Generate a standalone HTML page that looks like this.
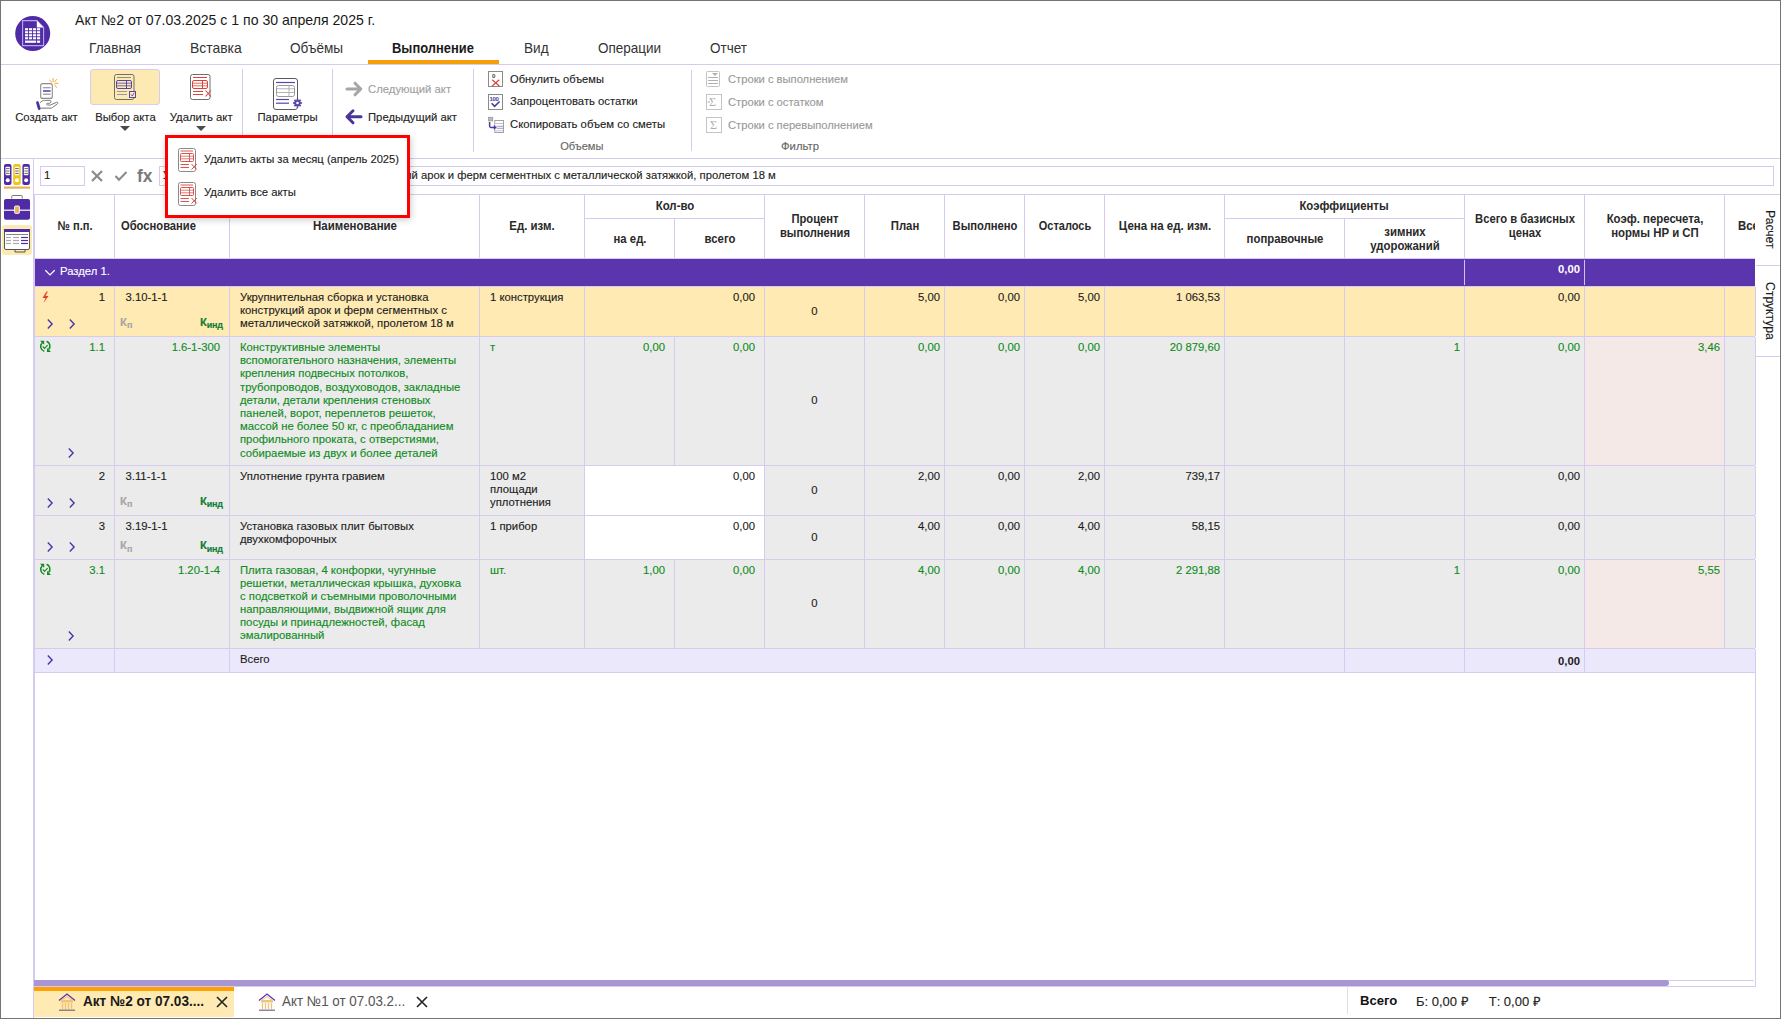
<!DOCTYPE html><html><head><meta charset="utf-8"><style>
html,body{margin:0;padding:0;}
body{width:1781px;height:1019px;position:relative;overflow:hidden;background:#fff;font-family:"Liberation Sans",sans-serif;}
.t{position:absolute;white-space:nowrap;line-height:1;-webkit-text-stroke:0.12px currentColor;}
.r{position:absolute;}
svg{position:absolute;overflow:visible;}
</style></head><body>
<div class="r" style="left:0px;top:0px;width:1781px;height:1px;background:#747474;"></div>
<div class="r" style="left:0px;top:0px;width:1px;height:1019px;background:#747474;"></div>
<div class="r" style="left:1780px;top:0px;width:1px;height:1019px;background:#747474;"></div>
<div class="r" style="left:0px;top:1018px;width:1781px;height:1px;background:#747474;"></div>
<svg style="left:15px;top:16px" width="36" height="36" viewBox="0 0 36 36">
<circle cx="17.7" cy="17.5" r="17.5" fill="#4f2ca6"/>
<path d="M7.6 4.6 H21.8 L28.6 11.4 V29.6 H7.6 Z" fill="none" stroke="#b9a9ee" stroke-width="1.1"/>
<path d="M21.8 4.6 V11.4 H28.6 Z" fill="#ffffff"/>
<g fill="#ffffff"><rect x="10" y="12.2" width="3.1" height="2.1"/><rect x="14" y="12.2" width="3.1" height="2.1"/><rect x="18" y="12.2" width="3.1" height="2.1"/><rect x="22" y="12.2" width="3.1" height="2.1"/><rect x="10" y="15.2" width="3.1" height="2.1"/><rect x="14" y="15.2" width="3.1" height="2.1"/><rect x="18" y="15.2" width="3.1" height="2.1"/><rect x="22" y="15.2" width="3.1" height="2.1"/><rect x="10" y="18.2" width="3.1" height="2.1"/><rect x="14" y="18.2" width="3.1" height="2.1"/><rect x="18" y="18.2" width="3.1" height="2.1"/><rect x="22" y="18.2" width="3.1" height="2.1"/><rect x="10" y="21.2" width="3.1" height="2.1"/><rect x="14" y="21.2" width="3.1" height="2.1"/><rect x="18" y="21.2" width="3.1" height="2.1"/><rect x="22" y="21.2" width="3.1" height="2.1"/><rect x="10" y="24.6" width="11.1" height="2.2"/><rect x="22" y="24.6" width="3.1" height="2.2"/></g></svg>
<div class="t" style="left:75px;top:13.36px;font-size:14.1px;color:#1a1a1a;-webkit-text-stroke:0;">Акт №2 от 07.03.2025 с 1 по 30 апреля 2025 г.</div>
<div class="t" style="left:89px;top:41.03px;font-size:14.5px;color:#333;transform:scaleX(0.9421);transform-origin:0 0;-webkit-text-stroke:0;">Главная</div>
<div class="t" style="left:189.5px;top:41.03px;font-size:14.5px;color:#333;transform:scaleX(0.9586);transform-origin:0 0;-webkit-text-stroke:0;">Вставка</div>
<div class="t" style="left:290px;top:41.03px;font-size:14.5px;color:#333;transform:scaleX(0.9379);transform-origin:0 0;-webkit-text-stroke:0;">Объёмы</div>
<div class="t" style="left:392px;top:41.53px;font-size:13.9px;color:#1a1a1a;font-weight:bold;-webkit-text-stroke:0;transform:scaleX(0.9309);transform-origin:0 0;-webkit-text-stroke:0;">Выполнение</div>
<div class="t" style="left:524.3px;top:41.03px;font-size:14.5px;color:#333;transform:scaleX(0.9379);transform-origin:0 0;-webkit-text-stroke:0;">Вид</div>
<div class="t" style="left:598px;top:41.03px;font-size:14.5px;color:#333;transform:scaleX(0.9310);transform-origin:0 0;-webkit-text-stroke:0;">Операции</div>
<div class="t" style="left:709.5px;top:41.03px;font-size:14.5px;color:#333;transform:scaleX(0.9310);transform-origin:0 0;-webkit-text-stroke:0;">Отчет</div>
<div class="r" style="left:368px;top:60px;width:131px;height:4px;background:#f59f0a;"></div>
<div class="r" style="left:1px;top:64px;width:1779px;height:1px;background:#d6caef;"></div>
<div class="r" style="left:1px;top:158px;width:1779px;height:1px;background:#d6caef;"></div>
<svg style="left:34px;top:76px" width="26" height="36" viewBox="34 76 26 36">
<rect x="40.7" y="83.6" width="11.6" height="14.8" rx="2" fill="#fff" stroke="#8c8c8c" stroke-width="1.1"/>
<line x1="43" y1="87.7" x2="50.6" y2="87.7" stroke="#9a9a9a" stroke-width="1.3"/>
<line x1="43" y1="91" x2="50.6" y2="91" stroke="#4d3a9e" stroke-width="1.5"/>
<line x1="43" y1="94.2" x2="50.6" y2="94.2" stroke="#9a9a9a" stroke-width="1.3"/>
<g stroke="#f4a93c" stroke-width="1" stroke-linecap="round"><line x1="53.1" y1="78.4" x2="53.1" y2="81.6"/><line x1="49.6" y1="80.2" x2="52" y2="82.4"/><line x1="56.5" y1="79.5" x2="54.6" y2="81.8"/><line x1="54.8" y1="83.3" x2="58" y2="83.3"/><line x1="54.6" y1="84.9" x2="56.5" y2="87.4"/></g>
<path d="M40 102.8 C41.5 101.2 42.8 100.4 44.5 100.4 H50 C51.3 100.4 51.3 102.8 49.5 103.3 H47.3 C46.3 103.3 46.3 105 47.5 105 H50.5 L56.5 102.3 C57.8 101.8 58.3 103.2 57.3 104 L52.5 107.5 C52 108 51.5 108.3 50.5 108.3 H40.5" fill="#fff" stroke="#7a7a7a" stroke-width="1"/>
<line x1="41" y1="108.2" x2="51" y2="108.2" stroke="#aaa" stroke-width="1.3"/>
<line x1="37.5" y1="102.6" x2="39.2" y2="108.6" stroke="#4b35a0" stroke-width="2.8" stroke-linecap="round"/>
</svg>
<div class="r" style="left:90px;top:69px;width:70px;height:36px;background:#fde9b2;box-sizing:border-box;border:1px solid #d9ccef;border-radius:3px;"></div>
<svg style="left:112px;top:72px" width="26" height="30" viewBox="112 72 26 30">
<rect x="114.5" y="74.5" width="19.5" height="25" rx="2" fill="#fde9b2" stroke="#6e6e6e" stroke-width="1"/>
<line x1="117" y1="77.5" x2="131" y2="77.5" stroke="#8c8c8c" stroke-width="1"/>
<rect x="116.5" y="80.5" width="15" height="8" rx="1.5" fill="none" stroke="#5a45a8" stroke-width="1"/>
<line x1="117" y1="83.2" x2="131" y2="83.2" stroke="#5a45a8" stroke-width="0.8"/>
<line x1="117" y1="85.8" x2="131" y2="85.8" stroke="#5a45a8" stroke-width="0.8"/>
<line x1="126.5" y1="80.5" x2="126.5" y2="88.5" stroke="#5a45a8" stroke-width="1"/>
<line x1="117" y1="91.5" x2="127" y2="91.5" stroke="#9a9a9a" stroke-width="1"/>
<line x1="117" y1="94.5" x2="127" y2="94.5" stroke="#9a9a9a" stroke-width="1"/>
<rect x="129.5" y="91.5" width="6" height="6" fill="#fde9b2" stroke="#5a45a8" stroke-width="1"/>
<path d="M131 94.5 L132.3 96 L134.3 92.8" fill="none" stroke="#5a45a8" stroke-width="0.9"/>
</svg>
<svg style="left:188px;top:72px" width="26" height="30" viewBox="188 72 26 30">
<rect x="190.5" y="74.5" width="19.5" height="25" rx="2" fill="#fff" stroke="#6e6e6e" stroke-width="1"/>
<line x1="193" y1="77.5" x2="207" y2="77.5" stroke="#d9433a" stroke-width="1"/>
<rect x="192.5" y="80.5" width="15" height="8" rx="1.5" fill="none" stroke="#d9433a" stroke-width="1"/>
<line x1="193" y1="83.2" x2="207" y2="83.2" stroke="#d9433a" stroke-width="0.8"/>
<line x1="193" y1="85.8" x2="207" y2="85.8" stroke="#d9433a" stroke-width="0.8"/>
<line x1="202.5" y1="80.5" x2="202.5" y2="88.5" stroke="#d9433a" stroke-width="1"/>
<line x1="193" y1="91.5" x2="203" y2="91.5" stroke="#d9433a" stroke-width="1"/>
<line x1="193" y1="94.5" x2="203" y2="94.5" stroke="#d9433a" stroke-width="1"/>
<path d="M205.5 90.5 L211 96.5 M211 90.5 L205.5 96.5" stroke="#d9433a" stroke-width="1.1"/>
</svg>
<div class="t" style="left:15.2px;top:111.63px;font-size:11.3px;color:#222;">Создать акт</div>
<div class="t" style="left:95.2px;top:111.63px;font-size:11.3px;color:#222;">Выбор акта</div>
<div class="t" style="left:169.8px;top:111.63px;font-size:11.3px;color:#222;">Удалить акт</div>
<svg style="left:120px;top:126px" width="10" height="5" viewBox="0 0 10 5"><path d="M0 0 H10 L5 5 Z" fill="#4a4a4a"/></svg>
<svg style="left:196px;top:126px" width="10" height="5" viewBox="0 0 10 5"><path d="M0 0 H10 L5 5 Z" fill="#4a4a4a"/></svg>
<div class="r" style="left:242px;top:69px;width:1px;height:83px;background:#d6caef;"></div>
<svg style="left:271px;top:76px" width="34" height="36" viewBox="271 76 34 36">
<rect x="273.5" y="78.5" width="24" height="31" rx="2.5" fill="#fff" stroke="#5a5a5a" stroke-width="1"/>
<line x1="276" y1="82.5" x2="295" y2="82.5" stroke="#5a45a8" stroke-width="1.2"/>
<rect x="276.5" y="85.5" width="18" height="11" rx="2" fill="#fff" stroke="#999" stroke-width="1"/>
<line x1="277" y1="88.8" x2="294" y2="88.8" stroke="#aaa" stroke-width="0.9"/>
<line x1="277" y1="92.5" x2="294" y2="92.5" stroke="#aaa" stroke-width="0.9"/>
<line x1="289" y1="85.5" x2="289" y2="96.5" stroke="#aaa" stroke-width="0.9"/>
<line x1="276" y1="99.5" x2="289" y2="99.5" stroke="#5a45a8" stroke-width="1.2"/>
<line x1="276" y1="103.2" x2="289" y2="103.2" stroke="#5a45a8" stroke-width="1.2"/>
<circle cx="297.5" cy="103" r="3.1" fill="#5a45a8"/><rect x="296.6" y="98.6" width="1.8" height="2.2" fill="#5a45a8" transform="rotate(0 297.5 103)"/><rect x="296.6" y="98.6" width="1.8" height="2.2" fill="#5a45a8" transform="rotate(45 297.5 103)"/><rect x="296.6" y="98.6" width="1.8" height="2.2" fill="#5a45a8" transform="rotate(90 297.5 103)"/><rect x="296.6" y="98.6" width="1.8" height="2.2" fill="#5a45a8" transform="rotate(135 297.5 103)"/><rect x="296.6" y="98.6" width="1.8" height="2.2" fill="#5a45a8" transform="rotate(180 297.5 103)"/><rect x="296.6" y="98.6" width="1.8" height="2.2" fill="#5a45a8" transform="rotate(225 297.5 103)"/><rect x="296.6" y="98.6" width="1.8" height="2.2" fill="#5a45a8" transform="rotate(270 297.5 103)"/><rect x="296.6" y="98.6" width="1.8" height="2.2" fill="#5a45a8" transform="rotate(315 297.5 103)"/>
<circle cx="297.5" cy="103" r="1.3" fill="#fff"/>
</svg>
<div class="t" style="left:257.5px;top:111.63px;font-size:11.3px;color:#222;">Параметры</div>
<div class="r" style="left:332px;top:69px;width:1px;height:83px;background:#d6caef;"></div>
<svg style="left:344px;top:80px" width="20" height="48" viewBox="344 80 20 48">
<path d="M347 89 H360 M355 83.2 L360.8 89 L355 94.8" fill="none" stroke="#a6a6a6" stroke-width="3" stroke-linecap="round" stroke-linejoin="round"/>
<path d="M361 116.8 H348 M353 110.8 L347 116.8 L353 122.8" fill="none" stroke="#4a3597" stroke-width="3" stroke-linecap="round" stroke-linejoin="round"/>
</svg>
<div class="t" style="left:368px;top:84.03px;font-size:11.3px;color:#a0a0a0;">Следующий акт</div>
<div class="t" style="left:368px;top:111.63px;font-size:11.3px;color:#222;">Предыдущий акт</div>
<div class="r" style="left:473px;top:69px;width:1px;height:83px;background:#d6caef;"></div>
<svg style="left:486px;top:69px" width="22" height="66" viewBox="486 69 22 66">
<rect x="488.5" y="71.5" width="14" height="15" fill="#fff" stroke="#8a8a8a" stroke-width="1"/>
<text x="492" y="77.8" font-size="6.2" font-weight="bold" fill="#444" font-family="Liberation Sans">0</text>
<path d="M492.2 79.7 L499.3 86 M499.3 79.7 L492.2 86" stroke="#d9433a" stroke-width="1.2"/>
<rect x="488.5" y="94.5" width="14" height="15" fill="#fff" stroke="#8a8a8a" stroke-width="1"/>
<text x="489.4" y="100.6" font-size="6" font-weight="bold" fill="#4d3a9e" font-family="Liberation Sans" letter-spacing="-0.3">100</text>
<path d="M491.6 103.3 L494.6 106.4 L499.6 101.5" fill="none" stroke="#4d3a9e" stroke-width="1.6"/>
<rect x="488.5" y="117.3" width="4.2" height="3.6" fill="#bbb" stroke="#999" stroke-width="0.8"/>
<rect x="494.8" y="120.5" width="8.7" height="12" fill="#fff" stroke="#999" stroke-width="0.9"/>
<line x1="495.5" y1="123.5" x2="503" y2="123.5" stroke="#aaa" stroke-width="0.7"/>
<line x1="496.5" y1="126.3" x2="503" y2="126.3" stroke="#8a7cc4" stroke-width="0.8"/>
<line x1="496.5" y1="128.3" x2="503" y2="128.3" stroke="#8a7cc4" stroke-width="0.8"/>
<line x1="495.5" y1="130.8" x2="503" y2="130.8" stroke="#aaa" stroke-width="0.7"/>
<path d="M489.6 122 V126 Q489.6 127.4 491 127.4 H494.5" fill="none" stroke="#4d3a9e" stroke-width="1.5"/>
<path d="M493.8 125 L496.8 127.4 L493.8 129.8 Z" fill="#4d3a9e"/>
</svg>
<div class="t" style="left:510px;top:73.60px;font-size:11.1px;color:#222;">Обнулить объемы</div>
<div class="t" style="left:510px;top:96.43px;font-size:11.3px;color:#222;">Запроцентовать остатки</div>
<div class="t" style="left:510px;top:119.43px;font-size:11.3px;color:#222;">Скопировать объем со сметы</div>
<div class="t" style="left:281.79999999999995px;width:600px;text-align:center;top:140.60px;font-size:11.1px;color:#666;">Объемы</div>
<div class="r" style="left:691px;top:70px;width:1px;height:81px;background:#d6caef;"></div>
<svg style="left:704px;top:69px" width="22" height="66" viewBox="704 69 22 66">
<rect x="706.5" y="71.5" width="13" height="15" rx="1" fill="#fff" stroke="#c4c4c4" stroke-width="1"/>
<line x1="708" y1="77.5" x2="718" y2="77.5" stroke="#b0b0b0" stroke-width="1"/>
<line x1="708" y1="80.5" x2="718" y2="80.5" stroke="#b0b0b0" stroke-width="1"/>
<line x1="708" y1="83.5" x2="718" y2="83.5" stroke="#b0b0b0" stroke-width="1"/>
<path d="M712 73 H718 L715 76 Z" fill="#b0b0b0"/>
<rect x="706.5" y="94.5" width="15" height="15" fill="#fff" stroke="#c4c4c4" stroke-width="1"/>
<text x="709" y="106" font-size="12" fill="#b0b0b0" font-family="Liberation Serif">Σ</text>
<line x1="707.5" y1="102" x2="710" y2="102" stroke="#b0b0b0" stroke-width="1"/>
<rect x="706.5" y="117.5" width="15" height="15" fill="#fff" stroke="#c4c4c4" stroke-width="1"/>
<text x="710" y="129" font-size="12" fill="#b0b0b0" font-family="Liberation Serif">Σ</text>
</svg>
<div class="t" style="left:728px;top:73.52px;font-size:11.2px;color:#999999;">Строки с выполнением</div>
<div class="t" style="left:728px;top:96.52px;font-size:11.2px;color:#999999;">Строки с остатком</div>
<div class="t" style="left:728px;top:119.52px;font-size:11.2px;color:#999999;">Строки с перевыполнением</div>
<div class="t" style="left:500.0px;width:600px;text-align:center;top:141.43px;font-size:11.3px;color:#666;">Фильтр</div>
<div class="r" style="left:33px;top:158px;width:1px;height:860px;background:#d6caef;"></div>
<svg style="left:2px;top:162px" width="30" height="95" viewBox="2 162 30 95">
<rect x="4" y="164" width="7.5" height="21" rx="2" fill="#4f2ca6"/>
<rect x="13.2" y="164" width="7.5" height="21" rx="2" fill="#f0c419"/>
<rect x="22.4" y="164" width="7.5" height="21" rx="2" fill="#4f2ca6"/>
<g fill="#fff">
<rect x="5.5" y="166.8" width="4.5" height="8.5" rx="0.8"/><rect x="14.7" y="166.8" width="4.5" height="8.5" rx="0.8"/><rect x="23.9" y="166.8" width="4.5" height="8.5" rx="0.8"/>
<circle cx="7.75" cy="180.3" r="2"/><circle cx="16.95" cy="180.3" r="2"/><circle cx="26.15" cy="180.3" r="2"/>
</g>
<g stroke="#555" stroke-width="0.9"><line x1="6" y1="168.6" x2="9.5" y2="168.6"/><line x1="6" y1="171" x2="9.5" y2="171"/><line x1="6" y1="173.4" x2="9.5" y2="173.4"/>
<line x1="15.2" y1="168.6" x2="18.7" y2="168.6"/><line x1="15.2" y1="171" x2="18.7" y2="171"/><line x1="15.2" y1="173.4" x2="18.7" y2="173.4"/>
<line x1="24.4" y1="168.6" x2="27.9" y2="168.6"/><line x1="24.4" y1="171" x2="27.9" y2="171"/><line x1="24.4" y1="173.4" x2="27.9" y2="173.4"/></g>
<rect x="4" y="186.5" width="26" height="2.2" fill="#e8b15a"/>
<path d="M11.8 198.5 V196.3 Q11.8 195.5 12.6 195.5 H21.4 Q22.2 195.5 22.2 196.3 V198.5" fill="none" stroke="#777" stroke-width="1"/>
<rect x="4" y="199" width="26" height="20.8" rx="2" fill="#4f2ca6"/>
<line x1="4" y1="210.2" x2="30" y2="210.2" stroke="#fff" stroke-width="1.2"/>
<rect x="14.6" y="206" width="4.8" height="7.4" rx="0.8" fill="#e8b15a" stroke="#fff" stroke-width="0.9"/>
<rect x="2" y="225" width="30" height="30" rx="3" fill="#fde9b2"/>
<rect x="4.5" y="229.5" width="25" height="20" rx="1.5" fill="#fff" stroke="#555" stroke-width="1"/>
<rect x="4" y="229" width="26" height="3" fill="#4f2ca6"/>
<line x1="6" y1="234.5" x2="28" y2="234.5" stroke="#666" stroke-width="0.8"/>
<g stroke="#aaa" stroke-width="1.2"><line x1="6" y1="237.5" x2="11" y2="237.5"/><line x1="6" y1="240.5" x2="11" y2="240.5"/><line x1="6" y1="243.5" x2="11" y2="243.5"/>
<line x1="13" y1="237.5" x2="19" y2="237.5"/><line x1="13" y1="240.5" x2="19" y2="240.5"/><line x1="13" y1="243.5" x2="19" y2="243.5"/></g>
<g stroke="#4f2ca6" stroke-width="1.2"><line x1="21" y1="237.5" x2="28" y2="237.5"/><line x1="21" y1="240.5" x2="28" y2="240.5"/><line x1="21" y1="243.5" x2="28" y2="243.5"/></g>
<path d="M15 250 V252 H25 V250" fill="none" stroke="#555" stroke-width="1"/>
</svg>
<div class="r" style="left:40px;top:166px;width:45px;height:20px;background:#fff;box-sizing:border-box;border:1px solid #d6caef;"></div>
<div class="t" style="left:44px;top:169.93px;font-size:11.3px;color:#222;">1</div>
<svg style="left:88px;top:166px" width="70" height="20" viewBox="88 166 70 20">
<path d="M92 171 L102 181 M102 171 L92 181" stroke="#8a8a8a" stroke-width="2.2"/>
<path d="M115.5 176 L119 179.8 L126.5 172" fill="none" stroke="#8a8a8a" stroke-width="2"/>
</svg>
<div class="t" style="left:136.5px;top:166.42px;font-size:19px;color:#7a7a7a;font-weight:bold;-webkit-text-stroke:0;transform:scaleX(0.9211);transform-origin:0 0;">fx</div>
<div class="r" style="left:159px;top:166px;width:1615px;height:20px;background:#fff;box-sizing:border-box;border:1px solid #d6caef;"></div>
<div class="t" style="left:163px;top:169.98px;font-size:11.25px;color:#222;">Укрупнительная сборка и установка конструкций арок и ферм сегментных с металлической затяжкой, пролетом 18 м</div>
<div class="r" style="left:34px;top:194px;width:1721px;height:1px;background:#d6caef;"></div>
<div class="r" style="left:34px;top:194px;width:1px;height:64px;background:#d6caef;"></div>
<div class="r" style="left:114px;top:194px;width:1px;height:64px;background:#d6caef;"></div>
<div class="r" style="left:229px;top:194px;width:1px;height:64px;background:#d6caef;"></div>
<div class="r" style="left:479px;top:194px;width:1px;height:64px;background:#d6caef;"></div>
<div class="r" style="left:584px;top:194px;width:1px;height:64px;background:#d6caef;"></div>
<div class="r" style="left:674px;top:218px;width:1px;height:40px;background:#d6caef;"></div>
<div class="r" style="left:764px;top:194px;width:1px;height:64px;background:#d6caef;"></div>
<div class="r" style="left:864px;top:194px;width:1px;height:64px;background:#d6caef;"></div>
<div class="r" style="left:944px;top:194px;width:1px;height:64px;background:#d6caef;"></div>
<div class="r" style="left:1024px;top:194px;width:1px;height:64px;background:#d6caef;"></div>
<div class="r" style="left:1104px;top:194px;width:1px;height:64px;background:#d6caef;"></div>
<div class="r" style="left:1224px;top:194px;width:1px;height:64px;background:#d6caef;"></div>
<div class="r" style="left:1344px;top:218px;width:1px;height:40px;background:#d6caef;"></div>
<div class="r" style="left:1464px;top:194px;width:1px;height:64px;background:#d6caef;"></div>
<div class="r" style="left:1584px;top:194px;width:1px;height:64px;background:#d6caef;"></div>
<div class="r" style="left:1724px;top:194px;width:1px;height:64px;background:#d6caef;"></div>
<div class="r" style="left:584px;top:218px;width:180px;height:1px;background:#d6caef;"></div>
<div class="r" style="left:1224px;top:218px;width:240px;height:1px;background:#d6caef;"></div>
<div class="t" style="left:-225.5px;width:600px;text-align:center;top:220.03px;font-size:12.6px;color:#2a2a2a;font-weight:bold;-webkit-text-stroke:0;transform:scaleX(0.8810);transform-origin:50% 0;">№ п.п.</div>
<div class="t" style="left:121.3px;top:220.03px;font-size:12.6px;color:#2a2a2a;font-weight:bold;-webkit-text-stroke:0;transform:scaleX(0.8889);transform-origin:0 0;">Обоснование</div>
<div class="t" style="left:55.0px;width:600px;text-align:center;top:220.03px;font-size:12.6px;color:#2a2a2a;font-weight:bold;-webkit-text-stroke:0;transform:scaleX(0.9087);transform-origin:50% 0;">Наименование</div>
<div class="t" style="left:232.0px;width:600px;text-align:center;top:220.03px;font-size:12.6px;color:#2a2a2a;font-weight:bold;-webkit-text-stroke:0;transform:scaleX(0.9087);transform-origin:50% 0;">Ед. изм.</div>
<div class="t" style="left:375.0px;width:600px;text-align:center;top:200.33px;font-size:12.6px;color:#2a2a2a;font-weight:bold;-webkit-text-stroke:0;transform:scaleX(0.9087);transform-origin:50% 0;">Кол-во</div>
<div class="t" style="left:330.0px;width:600px;text-align:center;top:232.73px;font-size:12.6px;color:#2a2a2a;font-weight:bold;-webkit-text-stroke:0;transform:scaleX(0.9008);transform-origin:50% 0;">на ед.</div>
<div class="t" style="left:420.0px;width:600px;text-align:center;top:232.73px;font-size:12.6px;color:#2a2a2a;font-weight:bold;-webkit-text-stroke:0;transform:scaleX(0.9008);transform-origin:50% 0;">всего</div>
<div class="t" style="left:514.5px;width:600px;text-align:center;top:213.33px;font-size:12.6px;color:#2a2a2a;font-weight:bold;-webkit-text-stroke:0;transform:scaleX(0.8889);transform-origin:50% 0;">Процент</div>
<div class="t" style="left:514.5px;width:600px;text-align:center;top:226.93px;font-size:12.6px;color:#2a2a2a;font-weight:bold;-webkit-text-stroke:0;transform:scaleX(0.8889);transform-origin:50% 0;">выполнения</div>
<div class="t" style="left:605.0px;width:600px;text-align:center;top:220.03px;font-size:12.6px;color:#2a2a2a;font-weight:bold;-webkit-text-stroke:0;transform:scaleX(0.9008);transform-origin:50% 0;">План</div>
<div class="t" style="left:685.0px;width:600px;text-align:center;top:220.03px;font-size:12.6px;color:#2a2a2a;font-weight:bold;-webkit-text-stroke:0;transform:scaleX(0.8929);transform-origin:50% 0;">Выполнено</div>
<div class="t" style="left:765.0px;width:600px;text-align:center;top:220.03px;font-size:12.6px;color:#2a2a2a;font-weight:bold;-webkit-text-stroke:0;transform:scaleX(0.8730);transform-origin:50% 0;">Осталось</div>
<div class="t" style="left:865.0px;width:600px;text-align:center;top:220.03px;font-size:12.6px;color:#2a2a2a;font-weight:bold;-webkit-text-stroke:0;transform:scaleX(0.9127);transform-origin:50% 0;">Цена на ед. изм.</div>
<div class="t" style="left:1044.0px;width:600px;text-align:center;top:200.33px;font-size:12.6px;color:#2a2a2a;font-weight:bold;-webkit-text-stroke:0;transform:scaleX(0.9008);transform-origin:50% 0;">Коэффициенты</div>
<div class="t" style="left:985.0px;width:600px;text-align:center;top:232.73px;font-size:12.6px;color:#2a2a2a;font-weight:bold;-webkit-text-stroke:0;transform:scaleX(0.9008);transform-origin:50% 0;">поправочные</div>
<div class="t" style="left:1105.0px;width:600px;text-align:center;top:226.33px;font-size:12.6px;color:#2a2a2a;font-weight:bold;-webkit-text-stroke:0;transform:scaleX(0.9048);transform-origin:50% 0;">зимних</div>
<div class="t" style="left:1105.0px;width:600px;text-align:center;top:240.13px;font-size:12.6px;color:#2a2a2a;font-weight:bold;-webkit-text-stroke:0;transform:scaleX(0.9048);transform-origin:50% 0;">удорожаний</div>
<div class="t" style="left:1225.0px;width:600px;text-align:center;top:212.73px;font-size:12.6px;color:#2a2a2a;font-weight:bold;-webkit-text-stroke:0;transform:scaleX(0.8929);transform-origin:50% 0;">Всего в базисных</div>
<div class="t" style="left:1225.0px;width:600px;text-align:center;top:227.13px;font-size:12.6px;color:#2a2a2a;font-weight:bold;-webkit-text-stroke:0;transform:scaleX(0.8929);transform-origin:50% 0;">ценах</div>
<div class="t" style="left:1355.0px;width:600px;text-align:center;top:212.73px;font-size:12.6px;color:#2a2a2a;font-weight:bold;-webkit-text-stroke:0;transform:scaleX(0.9048);transform-origin:50% 0;">Коэф. пересчета,</div>
<div class="t" style="left:1355.0px;width:600px;text-align:center;top:227.13px;font-size:12.6px;color:#2a2a2a;font-weight:bold;-webkit-text-stroke:0;transform:scaleX(0.9048);transform-origin:50% 0;">нормы НР и СП</div>
<div style="position:absolute;left:1725px;top:194px;width:30px;height:64px;overflow:hidden;"><div class="t" style="left:12.5px;top:26.03px;font-size:12.6px;color:#2a2a2a;font-weight:bold;transform:scaleX(0.9008);transform-origin:0 0;">Всего</div></div>
<div class="r" style="left:34px;top:259px;width:1721px;height:27px;background:#5b35ae;"></div>
<div class="r" style="left:34px;top:258px;width:1721px;height:1px;background:#d6caef;"></div>
<div class="r" style="left:1464px;top:260px;width:1px;height:25px;background:#cfc3ec;"></div>
<div class="r" style="left:1584px;top:260px;width:1px;height:25px;background:#cfc3ec;"></div>
<svg style="left:44px;top:267px" width="12" height="10" viewBox="44 267 12 10"><path d="M45.3 270.2 L50 274.9 L54.7 270.2" fill="none" stroke="#fff" stroke-width="1.3"/></svg>
<div class="t" style="left:60px;top:265.73px;font-size:11.3px;color:#fff;">Раздел 1.</div>
<div class="t" style="left:980px;width:600px;text-align:right;top:264.43px;font-size:11.3px;color:#fff;font-weight:bold;-webkit-text-stroke:0;">0,00</div>
<div class="r" style="left:34px;top:287px;width:1721px;height:49px;background:#feeab2;"></div>
<div class="r" style="left:34px;top:337px;width:1721px;height:128px;background:#ebebeb;"></div>
<div class="r" style="left:1585px;top:337px;width:139px;height:128px;background:#f4e9e6;"></div>
<div class="r" style="left:34px;top:466px;width:1721px;height:49px;background:#ebebeb;"></div>
<div class="r" style="left:585px;top:466px;width:179px;height:49px;background:#ffffff;"></div>
<div class="r" style="left:34px;top:516px;width:1721px;height:43px;background:#ebebeb;"></div>
<div class="r" style="left:585px;top:516px;width:179px;height:43px;background:#ffffff;"></div>
<div class="r" style="left:34px;top:560px;width:1721px;height:88px;background:#ebebeb;"></div>
<div class="r" style="left:1585px;top:560px;width:139px;height:88px;background:#f4e9e6;"></div>
<div class="r" style="left:34px;top:649px;width:1721px;height:23px;background:#ece8fc;"></div>
<div class="r" style="left:34px;top:286px;width:1721px;height:1px;background:#d6caef;"></div>
<div class="r" style="left:34px;top:336px;width:1721px;height:1px;background:#d6caef;"></div>
<div class="r" style="left:34px;top:465px;width:1721px;height:1px;background:#d6caef;"></div>
<div class="r" style="left:34px;top:515px;width:1721px;height:1px;background:#d6caef;"></div>
<div class="r" style="left:34px;top:559px;width:1721px;height:1px;background:#d6caef;"></div>
<div class="r" style="left:34px;top:648px;width:1721px;height:1px;background:#d6caef;"></div>
<div class="r" style="left:34px;top:672px;width:1721px;height:1px;background:#d6caef;"></div>
<div class="r" style="left:34px;top:287px;width:1px;height:49px;background:#d6caef;"></div>
<div class="r" style="left:114px;top:287px;width:1px;height:49px;background:#d6caef;"></div>
<div class="r" style="left:229px;top:287px;width:1px;height:49px;background:#d6caef;"></div>
<div class="r" style="left:479px;top:287px;width:1px;height:49px;background:#d6caef;"></div>
<div class="r" style="left:584px;top:287px;width:1px;height:49px;background:#d6caef;"></div>
<div class="r" style="left:764px;top:287px;width:1px;height:49px;background:#d6caef;"></div>
<div class="r" style="left:864px;top:287px;width:1px;height:49px;background:#d6caef;"></div>
<div class="r" style="left:944px;top:287px;width:1px;height:49px;background:#d6caef;"></div>
<div class="r" style="left:1024px;top:287px;width:1px;height:49px;background:#d6caef;"></div>
<div class="r" style="left:1104px;top:287px;width:1px;height:49px;background:#d6caef;"></div>
<div class="r" style="left:1224px;top:287px;width:1px;height:49px;background:#d6caef;"></div>
<div class="r" style="left:1344px;top:287px;width:1px;height:49px;background:#d6caef;"></div>
<div class="r" style="left:1464px;top:287px;width:1px;height:49px;background:#d6caef;"></div>
<div class="r" style="left:1584px;top:287px;width:1px;height:49px;background:#d6caef;"></div>
<div class="r" style="left:1724px;top:287px;width:1px;height:49px;background:#d6caef;"></div>
<div class="r" style="left:1755px;top:287px;width:1px;height:49px;background:#d6caef;"></div>
<div class="r" style="left:34px;top:337px;width:1px;height:128px;background:#d6caef;"></div>
<div class="r" style="left:114px;top:337px;width:1px;height:128px;background:#d6caef;"></div>
<div class="r" style="left:229px;top:337px;width:1px;height:128px;background:#d6caef;"></div>
<div class="r" style="left:479px;top:337px;width:1px;height:128px;background:#d6caef;"></div>
<div class="r" style="left:584px;top:337px;width:1px;height:128px;background:#d6caef;"></div>
<div class="r" style="left:674px;top:337px;width:1px;height:128px;background:#d6caef;"></div>
<div class="r" style="left:764px;top:337px;width:1px;height:128px;background:#d6caef;"></div>
<div class="r" style="left:864px;top:337px;width:1px;height:128px;background:#d6caef;"></div>
<div class="r" style="left:944px;top:337px;width:1px;height:128px;background:#d6caef;"></div>
<div class="r" style="left:1024px;top:337px;width:1px;height:128px;background:#d6caef;"></div>
<div class="r" style="left:1104px;top:337px;width:1px;height:128px;background:#d6caef;"></div>
<div class="r" style="left:1224px;top:337px;width:1px;height:128px;background:#d6caef;"></div>
<div class="r" style="left:1344px;top:337px;width:1px;height:128px;background:#d6caef;"></div>
<div class="r" style="left:1464px;top:337px;width:1px;height:128px;background:#d6caef;"></div>
<div class="r" style="left:1584px;top:337px;width:1px;height:128px;background:#d6caef;"></div>
<div class="r" style="left:1724px;top:337px;width:1px;height:128px;background:#d6caef;"></div>
<div class="r" style="left:1755px;top:337px;width:1px;height:128px;background:#d6caef;"></div>
<div class="r" style="left:34px;top:466px;width:1px;height:49px;background:#d6caef;"></div>
<div class="r" style="left:114px;top:466px;width:1px;height:49px;background:#d6caef;"></div>
<div class="r" style="left:229px;top:466px;width:1px;height:49px;background:#d6caef;"></div>
<div class="r" style="left:479px;top:466px;width:1px;height:49px;background:#d6caef;"></div>
<div class="r" style="left:584px;top:466px;width:1px;height:49px;background:#d6caef;"></div>
<div class="r" style="left:764px;top:466px;width:1px;height:49px;background:#d6caef;"></div>
<div class="r" style="left:864px;top:466px;width:1px;height:49px;background:#d6caef;"></div>
<div class="r" style="left:944px;top:466px;width:1px;height:49px;background:#d6caef;"></div>
<div class="r" style="left:1024px;top:466px;width:1px;height:49px;background:#d6caef;"></div>
<div class="r" style="left:1104px;top:466px;width:1px;height:49px;background:#d6caef;"></div>
<div class="r" style="left:1224px;top:466px;width:1px;height:49px;background:#d6caef;"></div>
<div class="r" style="left:1344px;top:466px;width:1px;height:49px;background:#d6caef;"></div>
<div class="r" style="left:1464px;top:466px;width:1px;height:49px;background:#d6caef;"></div>
<div class="r" style="left:1584px;top:466px;width:1px;height:49px;background:#d6caef;"></div>
<div class="r" style="left:1724px;top:466px;width:1px;height:49px;background:#d6caef;"></div>
<div class="r" style="left:1755px;top:466px;width:1px;height:49px;background:#d6caef;"></div>
<div class="r" style="left:34px;top:516px;width:1px;height:43px;background:#d6caef;"></div>
<div class="r" style="left:114px;top:516px;width:1px;height:43px;background:#d6caef;"></div>
<div class="r" style="left:229px;top:516px;width:1px;height:43px;background:#d6caef;"></div>
<div class="r" style="left:479px;top:516px;width:1px;height:43px;background:#d6caef;"></div>
<div class="r" style="left:584px;top:516px;width:1px;height:43px;background:#d6caef;"></div>
<div class="r" style="left:764px;top:516px;width:1px;height:43px;background:#d6caef;"></div>
<div class="r" style="left:864px;top:516px;width:1px;height:43px;background:#d6caef;"></div>
<div class="r" style="left:944px;top:516px;width:1px;height:43px;background:#d6caef;"></div>
<div class="r" style="left:1024px;top:516px;width:1px;height:43px;background:#d6caef;"></div>
<div class="r" style="left:1104px;top:516px;width:1px;height:43px;background:#d6caef;"></div>
<div class="r" style="left:1224px;top:516px;width:1px;height:43px;background:#d6caef;"></div>
<div class="r" style="left:1344px;top:516px;width:1px;height:43px;background:#d6caef;"></div>
<div class="r" style="left:1464px;top:516px;width:1px;height:43px;background:#d6caef;"></div>
<div class="r" style="left:1584px;top:516px;width:1px;height:43px;background:#d6caef;"></div>
<div class="r" style="left:1724px;top:516px;width:1px;height:43px;background:#d6caef;"></div>
<div class="r" style="left:1755px;top:516px;width:1px;height:43px;background:#d6caef;"></div>
<div class="r" style="left:34px;top:560px;width:1px;height:88px;background:#d6caef;"></div>
<div class="r" style="left:114px;top:560px;width:1px;height:88px;background:#d6caef;"></div>
<div class="r" style="left:229px;top:560px;width:1px;height:88px;background:#d6caef;"></div>
<div class="r" style="left:479px;top:560px;width:1px;height:88px;background:#d6caef;"></div>
<div class="r" style="left:584px;top:560px;width:1px;height:88px;background:#d6caef;"></div>
<div class="r" style="left:674px;top:560px;width:1px;height:88px;background:#d6caef;"></div>
<div class="r" style="left:764px;top:560px;width:1px;height:88px;background:#d6caef;"></div>
<div class="r" style="left:864px;top:560px;width:1px;height:88px;background:#d6caef;"></div>
<div class="r" style="left:944px;top:560px;width:1px;height:88px;background:#d6caef;"></div>
<div class="r" style="left:1024px;top:560px;width:1px;height:88px;background:#d6caef;"></div>
<div class="r" style="left:1104px;top:560px;width:1px;height:88px;background:#d6caef;"></div>
<div class="r" style="left:1224px;top:560px;width:1px;height:88px;background:#d6caef;"></div>
<div class="r" style="left:1344px;top:560px;width:1px;height:88px;background:#d6caef;"></div>
<div class="r" style="left:1464px;top:560px;width:1px;height:88px;background:#d6caef;"></div>
<div class="r" style="left:1584px;top:560px;width:1px;height:88px;background:#d6caef;"></div>
<div class="r" style="left:1724px;top:560px;width:1px;height:88px;background:#d6caef;"></div>
<div class="r" style="left:1755px;top:560px;width:1px;height:88px;background:#d6caef;"></div>
<div class="r" style="left:114px;top:649px;width:1px;height:23px;background:#d6caef;"></div>
<div class="r" style="left:229px;top:649px;width:1px;height:23px;background:#d6caef;"></div>
<div class="r" style="left:1344px;top:649px;width:1px;height:23px;background:#d6caef;"></div>
<div class="r" style="left:1464px;top:649px;width:1px;height:23px;background:#d6caef;"></div>
<div class="r" style="left:1584px;top:649px;width:1px;height:23px;background:#d6caef;"></div>
<div class="r" style="left:1755px;top:649px;width:1px;height:23px;background:#d6caef;"></div>
<div class="r" style="left:34px;top:259px;width:1px;height:728px;background:#d6caef;"></div>
<div class="r" style="left:1755px;top:672px;width:1px;height:314px;background:#d6caef;"></div>
<svg style="left:41px;top:291px" width="9" height="13" viewBox="41 291 9 13"><path d="M46.5 291.5 L42.5 298 H45.5 L43.5 303 L48.5 296 H45.5 L47.8 291.5 Z" fill="#e8402a"/></svg>
<div class="t" style="left:-495px;width:600px;text-align:right;top:292.43px;font-size:11.3px;color:#1c1c1c;">1</div>
<div class="t" style="left:125.5px;top:292.43px;font-size:11.3px;color:#1c1c1c;">3.10-1-1</div>
<svg style="left:46px;top:318px" width="9" height="13" viewBox="46 318 9 13"><path d="M47.8 319.6 L52.1 324 L47.8 328.4" fill="none" stroke="#4b35a8" stroke-width="1.4"/></svg>
<svg style="left:68px;top:318px" width="9" height="13" viewBox="68 318 9 13"><path d="M69.8 319.6 L74.1 324 L69.8 328.4" fill="none" stroke="#4b35a8" stroke-width="1.4"/></svg>
<div class="t" style="left:120px;top:316.93px;font-size:11.3px;color:#a6a6a6;font-weight:bold;">К<span style="font-size:9px;position:relative;top:2.5px;">п</span></div>
<div class="t" style="left:200px;top:316.93px;font-size:11.3px;color:#0d7d30;font-weight:bold;letter-spacing:-0.2px;">К<span style="font-size:9px;position:relative;top:2.5px;">инд</span></div>
<div class="t" style="left:240px;top:292.43px;font-size:11.3px;color:#1c1c1c;">Укрупнительная сборка и установка</div>
<div class="t" style="left:240px;top:305.43px;font-size:11.3px;color:#1c1c1c;">конструкций арок и ферм сегментных с</div>
<div class="t" style="left:240px;top:318.43px;font-size:11.3px;color:#1c1c1c;">металлической затяжкой, пролетом 18 м</div>
<div class="t" style="left:490px;top:292.43px;font-size:11.3px;color:#1c1c1c;">1 конструкция</div>
<div class="t" style="left:155px;width:600px;text-align:right;top:292.43px;font-size:11.3px;color:#1c1c1c;">0,00</div>
<div class="t" style="left:514.5px;width:600px;text-align:center;top:306.43px;font-size:11.3px;color:#1c1c1c;">0</div>
<div class="t" style="left:340px;width:600px;text-align:right;top:292.43px;font-size:11.3px;color:#1c1c1c;">5,00</div>
<div class="t" style="left:420px;width:600px;text-align:right;top:292.43px;font-size:11.3px;color:#1c1c1c;">0,00</div>
<div class="t" style="left:500px;width:600px;text-align:right;top:292.43px;font-size:11.3px;color:#1c1c1c;">5,00</div>
<div class="t" style="left:620px;width:600px;text-align:right;top:292.43px;font-size:11.3px;color:#1c1c1c;">1 063,53</div>
<div class="t" style="left:980px;width:600px;text-align:right;top:292.43px;font-size:11.3px;color:#1c1c1c;">0,00</div>
<svg style="left:36px;top:338px" width="20" height="20" viewBox="0 0 20 20">
<path d="M8.3 13.4 A5.2 5.2 0 0 1 6.2 4.8" fill="none" stroke="#128a1e" stroke-width="1.5"/>
<path d="M10.6 3.3 A5.2 5.2 0 0 1 12.6 11.6" fill="none" stroke="#128a1e" stroke-width="1.5"/>
<path d="M4 2.7 H8.2 V6.8 Z" fill="#128a1e"/>
<path d="M15 13.9 H11 V9.9 Z" fill="#128a1e"/>
<path d="M6.8 8.3 L8.6 10.3 L11.6 7.2" fill="none" stroke="#128a1e" stroke-width="1.2"/>
</svg>
<div class="t" style="left:-495px;width:600px;text-align:right;top:341.93px;font-size:11.3px;color:#0e8c1b;">1.1</div>
<div class="t" style="left:-380px;width:600px;text-align:right;top:341.93px;font-size:11.3px;color:#0e8c1b;">1.6-1-300</div>
<div class="t" style="left:240px;top:341.93px;font-size:11.3px;color:#0e8c1b;">Конструктивные элементы</div>
<div class="t" style="left:240px;top:355.13px;font-size:11.3px;color:#0e8c1b;">вспомогательного назначения, элементы</div>
<div class="t" style="left:240px;top:368.33px;font-size:11.3px;color:#0e8c1b;">крепления подвесных потолков,</div>
<div class="t" style="left:240px;top:381.53px;font-size:11.3px;color:#0e8c1b;">трубопроводов, воздуховодов, закладные</div>
<div class="t" style="left:240px;top:394.73px;font-size:11.3px;color:#0e8c1b;">детали, детали крепления стеновых</div>
<div class="t" style="left:240px;top:407.93px;font-size:11.3px;color:#0e8c1b;">панелей, ворот, переплетов решеток,</div>
<div class="t" style="left:240px;top:421.13px;font-size:11.3px;color:#0e8c1b;">массой не более 50 кг, с преобладанием</div>
<div class="t" style="left:240px;top:434.33px;font-size:11.3px;color:#0e8c1b;">профильного проката, с отверстиями,</div>
<div class="t" style="left:240px;top:447.53px;font-size:11.3px;color:#0e8c1b;">собираемые из двух и более деталей</div>
<svg style="left:67px;top:447px" width="9" height="13" viewBox="67 447 9 13"><path d="M68.8 448.6 L73.1 453 L68.8 457.4" fill="none" stroke="#4b35a8" stroke-width="1.4"/></svg>
<div class="t" style="left:490px;top:341.93px;font-size:11.3px;color:#0e8c1b;">т</div>
<div class="t" style="left:65px;width:600px;text-align:right;top:341.93px;font-size:11.3px;color:#0e8c1b;">0,00</div>
<div class="t" style="left:155px;width:600px;text-align:right;top:341.93px;font-size:11.3px;color:#0e8c1b;">0,00</div>
<div class="t" style="left:514.5px;width:600px;text-align:center;top:395.43px;font-size:11.3px;color:#1c1c1c;">0</div>
<div class="t" style="left:340px;width:600px;text-align:right;top:341.93px;font-size:11.3px;color:#0e8c1b;">0,00</div>
<div class="t" style="left:420px;width:600px;text-align:right;top:341.93px;font-size:11.3px;color:#0e8c1b;">0,00</div>
<div class="t" style="left:500px;width:600px;text-align:right;top:341.93px;font-size:11.3px;color:#0e8c1b;">0,00</div>
<div class="t" style="left:620px;width:600px;text-align:right;top:341.93px;font-size:11.3px;color:#0e8c1b;">20 879,60</div>
<div class="t" style="left:860px;width:600px;text-align:right;top:341.93px;font-size:11.3px;color:#0e8c1b;">1</div>
<div class="t" style="left:980px;width:600px;text-align:right;top:341.93px;font-size:11.3px;color:#0e8c1b;">0,00</div>
<div class="t" style="left:1120px;width:600px;text-align:right;top:341.93px;font-size:11.3px;color:#0e8c1b;">3,46</div>
<div class="t" style="left:-495px;width:600px;text-align:right;top:471.43px;font-size:11.3px;color:#1c1c1c;">2</div>
<div class="t" style="left:125.5px;top:471.43px;font-size:11.3px;color:#1c1c1c;">3.11-1-1</div>
<svg style="left:46px;top:497px" width="9" height="13" viewBox="46 497 9 13"><path d="M47.8 498.6 L52.1 503 L47.8 507.4" fill="none" stroke="#4b35a8" stroke-width="1.4"/></svg>
<svg style="left:68px;top:497px" width="9" height="13" viewBox="68 497 9 13"><path d="M69.8 498.6 L74.1 503 L69.8 507.4" fill="none" stroke="#4b35a8" stroke-width="1.4"/></svg>
<div class="t" style="left:120px;top:495.93px;font-size:11.3px;color:#a6a6a6;font-weight:bold;">К<span style="font-size:9px;position:relative;top:2.5px;">п</span></div>
<div class="t" style="left:200px;top:495.93px;font-size:11.3px;color:#0d7d30;font-weight:bold;letter-spacing:-0.2px;">К<span style="font-size:9px;position:relative;top:2.5px;">инд</span></div>
<div class="t" style="left:240px;top:471.43px;font-size:11.3px;color:#1c1c1c;">Уплотнение грунта гравием</div>
<div class="t" style="left:490px;top:471.43px;font-size:11.3px;color:#1c1c1c;">100 м2</div>
<div class="t" style="left:490px;top:484.43px;font-size:11.3px;color:#1c1c1c;">площади</div>
<div class="t" style="left:490px;top:497.43px;font-size:11.3px;color:#1c1c1c;">уплотнения</div>
<div class="t" style="left:155px;width:600px;text-align:right;top:471.43px;font-size:11.3px;color:#1c1c1c;">0,00</div>
<div class="t" style="left:514.5px;width:600px;text-align:center;top:485.43px;font-size:11.3px;color:#1c1c1c;">0</div>
<div class="t" style="left:340px;width:600px;text-align:right;top:471.43px;font-size:11.3px;color:#1c1c1c;">2,00</div>
<div class="t" style="left:420px;width:600px;text-align:right;top:471.43px;font-size:11.3px;color:#1c1c1c;">0,00</div>
<div class="t" style="left:500px;width:600px;text-align:right;top:471.43px;font-size:11.3px;color:#1c1c1c;">2,00</div>
<div class="t" style="left:620px;width:600px;text-align:right;top:471.43px;font-size:11.3px;color:#1c1c1c;">739,17</div>
<div class="t" style="left:980px;width:600px;text-align:right;top:471.43px;font-size:11.3px;color:#1c1c1c;">0,00</div>
<div class="t" style="left:-495px;width:600px;text-align:right;top:521.43px;font-size:11.3px;color:#1c1c1c;">3</div>
<div class="t" style="left:125.5px;top:521.43px;font-size:11.3px;color:#1c1c1c;">3.19-1-1</div>
<svg style="left:46px;top:541px" width="9" height="13" viewBox="46 541 9 13"><path d="M47.8 542.6 L52.1 547 L47.8 551.4" fill="none" stroke="#4b35a8" stroke-width="1.4"/></svg>
<svg style="left:68px;top:541px" width="9" height="13" viewBox="68 541 9 13"><path d="M69.8 542.6 L74.1 547 L69.8 551.4" fill="none" stroke="#4b35a8" stroke-width="1.4"/></svg>
<div class="t" style="left:120px;top:540.43px;font-size:11.3px;color:#a6a6a6;font-weight:bold;">К<span style="font-size:9px;position:relative;top:2.5px;">п</span></div>
<div class="t" style="left:200px;top:540.43px;font-size:11.3px;color:#0d7d30;font-weight:bold;letter-spacing:-0.2px;">К<span style="font-size:9px;position:relative;top:2.5px;">инд</span></div>
<div class="t" style="left:240px;top:521.43px;font-size:11.3px;color:#1c1c1c;">Установка газовых плит бытовых</div>
<div class="t" style="left:240px;top:534.43px;font-size:11.3px;color:#1c1c1c;">двухкомфорочных</div>
<div class="t" style="left:490px;top:521.43px;font-size:11.3px;color:#1c1c1c;">1 прибор</div>
<div class="t" style="left:155px;width:600px;text-align:right;top:521.43px;font-size:11.3px;color:#1c1c1c;">0,00</div>
<div class="t" style="left:514.5px;width:600px;text-align:center;top:531.93px;font-size:11.3px;color:#1c1c1c;">0</div>
<div class="t" style="left:340px;width:600px;text-align:right;top:521.43px;font-size:11.3px;color:#1c1c1c;">4,00</div>
<div class="t" style="left:420px;width:600px;text-align:right;top:521.43px;font-size:11.3px;color:#1c1c1c;">0,00</div>
<div class="t" style="left:500px;width:600px;text-align:right;top:521.43px;font-size:11.3px;color:#1c1c1c;">4,00</div>
<div class="t" style="left:620px;width:600px;text-align:right;top:521.43px;font-size:11.3px;color:#1c1c1c;">58,15</div>
<div class="t" style="left:980px;width:600px;text-align:right;top:521.43px;font-size:11.3px;color:#1c1c1c;">0,00</div>
<svg style="left:36px;top:561px" width="20" height="20" viewBox="0 0 20 20">
<path d="M8.3 13.4 A5.2 5.2 0 0 1 6.2 4.8" fill="none" stroke="#128a1e" stroke-width="1.5"/>
<path d="M10.6 3.3 A5.2 5.2 0 0 1 12.6 11.6" fill="none" stroke="#128a1e" stroke-width="1.5"/>
<path d="M4 2.7 H8.2 V6.8 Z" fill="#128a1e"/>
<path d="M15 13.9 H11 V9.9 Z" fill="#128a1e"/>
<path d="M6.8 8.3 L8.6 10.3 L11.6 7.2" fill="none" stroke="#128a1e" stroke-width="1.2"/>
</svg>
<div class="t" style="left:-495px;width:600px;text-align:right;top:564.93px;font-size:11.3px;color:#0e8c1b;">3.1</div>
<div class="t" style="left:-380px;width:600px;text-align:right;top:564.93px;font-size:11.3px;color:#0e8c1b;">1.20-1-4</div>
<div class="t" style="left:240px;top:564.93px;font-size:11.3px;color:#0e8c1b;">Плита газовая, 4 конфорки, чугунные</div>
<div class="t" style="left:240px;top:578.03px;font-size:11.3px;color:#0e8c1b;">решетки, металлическая крышка, духовка</div>
<div class="t" style="left:240px;top:591.13px;font-size:11.3px;color:#0e8c1b;">с подсветкой и съемными проволочными</div>
<div class="t" style="left:240px;top:604.23px;font-size:11.3px;color:#0e8c1b;">направляющими, выдвижной ящик для</div>
<div class="t" style="left:240px;top:617.33px;font-size:11.3px;color:#0e8c1b;">посуды и принадлежностей, фасад</div>
<div class="t" style="left:240px;top:630.43px;font-size:11.3px;color:#0e8c1b;">эмалированный</div>
<svg style="left:67px;top:630px" width="9" height="13" viewBox="67 630 9 13"><path d="M68.8 631.6 L73.1 636 L68.8 640.4" fill="none" stroke="#4b35a8" stroke-width="1.4"/></svg>
<div class="t" style="left:490px;top:564.93px;font-size:11.3px;color:#0e8c1b;">шт.</div>
<div class="t" style="left:65px;width:600px;text-align:right;top:564.93px;font-size:11.3px;color:#0e8c1b;">1,00</div>
<div class="t" style="left:155px;width:600px;text-align:right;top:564.93px;font-size:11.3px;color:#0e8c1b;">0,00</div>
<div class="t" style="left:514.5px;width:600px;text-align:center;top:597.93px;font-size:11.3px;color:#1c1c1c;">0</div>
<div class="t" style="left:340px;width:600px;text-align:right;top:564.93px;font-size:11.3px;color:#0e8c1b;">4,00</div>
<div class="t" style="left:420px;width:600px;text-align:right;top:564.93px;font-size:11.3px;color:#0e8c1b;">0,00</div>
<div class="t" style="left:500px;width:600px;text-align:right;top:564.93px;font-size:11.3px;color:#0e8c1b;">4,00</div>
<div class="t" style="left:620px;width:600px;text-align:right;top:564.93px;font-size:11.3px;color:#0e8c1b;">2 291,88</div>
<div class="t" style="left:860px;width:600px;text-align:right;top:564.93px;font-size:11.3px;color:#0e8c1b;">1</div>
<div class="t" style="left:980px;width:600px;text-align:right;top:564.93px;font-size:11.3px;color:#0e8c1b;">0,00</div>
<div class="t" style="left:1120px;width:600px;text-align:right;top:564.93px;font-size:11.3px;color:#0e8c1b;">5,55</div>
<svg style="left:46px;top:654px" width="9" height="13" viewBox="46 654 9 13"><path d="M47.8 655.6 L52.1 660 L47.8 664.4" fill="none" stroke="#4b35a8" stroke-width="1.4"/></svg>
<div class="t" style="left:240px;top:654.43px;font-size:11.3px;color:#1c1c1c;">Всего</div>
<div class="t" style="left:980px;width:600px;text-align:right;top:656.43px;font-size:11.3px;color:#1c1c1c;font-weight:bold;-webkit-text-stroke:0;">0,00</div>
<div class="r" style="left:1755px;top:194px;width:25px;height:1px;background:#d6caef;"></div>
<div class="r" style="left:1756px;top:265px;width:24px;height:1px;background:#d6caef;"></div>
<div class="r" style="left:1756px;top:356px;width:24px;height:1px;background:#d6caef;"></div>
<div class="t" style="left:1770.3px;top:210px;font-size:12.1px;color:#1a1a1a;writing-mode:vertical-rl;line-height:1;transform:translateX(-50%);">Расчет</div>
<div class="t" style="left:1770.3px;top:282px;font-size:12.2px;color:#1a1a1a;writing-mode:vertical-rl;line-height:1;transform:translateX(-50%);">Структура</div>
<div class="r" style="left:34px;top:980px;width:1720px;height:1px;background:#d6caef;"></div>
<div class="r" style="left:34px;top:980px;width:1635px;height:6px;background:#a796d2;border-radius:0 3px 3px 0;"></div>
<div class="r" style="left:34px;top:986px;width:1722px;height:1px;background:#d6caef;"></div>
<div class="r" style="left:34px;top:987px;width:200px;height:30px;background:#feeab2;"></div>
<div class="r" style="left:34px;top:987px;width:200px;height:4px;background:#ffa000;"></div>
<svg style="left:58px;top:993px" width="20" height="20" viewBox="0 0 20 20">
<path d="M1 7.5 L9 1 L17 7.5" fill="none" stroke="#5b35ae" stroke-width="1.3"/>
<path d="M3.5 7.5 L9 3.5 L14.5 7.5 Z" fill="none" stroke="#f0c27a" stroke-width="1"/>
<rect x="3" y="8" width="12" height="1.5" fill="#f0c27a"/>
<g stroke="#f0c27a" stroke-width="1.3"><line x1="4.5" y1="10" x2="4.5" y2="16"/><line x1="7.5" y1="10" x2="7.5" y2="16"/><line x1="10.5" y1="10" x2="10.5" y2="16"/><line x1="13.5" y1="10" x2="13.5" y2="16"/></g>
<rect x="1" y="16.6" width="16" height="1.2" fill="#6e6a80"/>
</svg>
<div class="t" style="left:82.5px;top:993.81px;font-size:14.4px;color:#1a1a1a;font-weight:bold;-webkit-text-stroke:0;transform:scaleX(0.9444);transform-origin:0 0;">Акт №2 от 07.03....</div>
<svg style="left:216px;top:996px" width="12" height="12" viewBox="0 0 12 12"><path d="M1 1 L11 11 M11 1 L1 11" stroke="#222" stroke-width="1.6"/></svg>
<svg style="left:258px;top:993px" width="20" height="20" viewBox="0 0 20 20">
<path d="M1 7.5 L9 1 L17 7.5" fill="none" stroke="#5b35ae" stroke-width="1.3"/>
<path d="M3.5 7.5 L9 3.5 L14.5 7.5 Z" fill="none" stroke="#f0c27a" stroke-width="1"/>
<rect x="3" y="8" width="12" height="1.5" fill="#f0c27a"/>
<g stroke="#f0c27a" stroke-width="1.3"><line x1="4.5" y1="10" x2="4.5" y2="16"/><line x1="7.5" y1="10" x2="7.5" y2="16"/><line x1="10.5" y1="10" x2="10.5" y2="16"/><line x1="13.5" y1="10" x2="13.5" y2="16"/></g>
<rect x="1" y="16.6" width="16" height="1.2" fill="#6e6a80"/>
</svg>
<div class="t" style="left:282.3px;top:993.98px;font-size:14.2px;color:#555;transform:scaleX(0.9437);transform-origin:0 0;-webkit-text-stroke:0;">Акт №1 от 07.03.2...</div>
<svg style="left:416px;top:996px" width="12" height="12" viewBox="0 0 12 12"><path d="M1 1 L11 11 M11 1 L1 11" stroke="#222" stroke-width="1.6"/></svg>
<div class="r" style="left:1347px;top:987px;width:1px;height:27px;background:#e0e0e0;"></div>
<div class="t" style="left:1360px;top:993.91px;font-size:13.1px;color:#111;font-weight:bold;-webkit-text-stroke:0;">Всего</div>
<div class="t" style="left:1416px;top:994.50px;font-size:13.0px;color:#222;">Б: 0,00 ₽</div>
<div class="t" style="left:1488.7px;top:994.50px;font-size:13.0px;color:#222;">Т: 0,00 ₽</div>
<div class="r" style="left:165px;top:135px;width:245px;height:83px;box-sizing:border-box;border:3.5px solid #ff0000;background:#fff;box-shadow:1px 2px 7px rgba(0,0,0,0.2);"></div>
<svg style="left:177px;top:148px" width="22" height="26" viewBox="0 0 22 26">
<rect x="1.5" y="0.5" width="17" height="23" rx="2" fill="#fff" stroke="#8a8a8a" stroke-width="1"/>
<line x1="3.5" y1="3" x2="16" y2="3" stroke="#d9433a" stroke-width="0.9"/>
<rect x="3.5" y="5.5" width="13" height="8" rx="1" fill="none" stroke="#d9433a" stroke-width="0.9"/>
<line x1="3.5" y1="8.2" x2="16.5" y2="8.2" stroke="#d9433a" stroke-width="0.7"/>
<line x1="3.5" y1="10.8" x2="16.5" y2="10.8" stroke="#d9433a" stroke-width="0.7"/>
<line x1="12.5" y1="5.5" x2="12.5" y2="13.5" stroke="#d9433a" stroke-width="0.8"/>
<line x1="3.5" y1="16.5" x2="12" y2="16.5" stroke="#d9433a" stroke-width="0.9"/>
<line x1="3.5" y1="19.5" x2="12" y2="19.5" stroke="#d9433a" stroke-width="0.9"/>
<path d="M14.5 16 L19.8 21.5 M19.8 16 L14.5 21.5" stroke="#d9433a" stroke-width="1"/>
</svg>
<svg style="left:177px;top:182px" width="22" height="26" viewBox="0 0 22 26">
<rect x="1.5" y="0.5" width="17" height="23" rx="2" fill="#fff" stroke="#8a8a8a" stroke-width="1"/>
<line x1="3.5" y1="3" x2="16" y2="3" stroke="#d9433a" stroke-width="0.9"/>
<rect x="3.5" y="5.5" width="13" height="8" rx="1" fill="none" stroke="#d9433a" stroke-width="0.9"/>
<line x1="3.5" y1="8.2" x2="16.5" y2="8.2" stroke="#d9433a" stroke-width="0.7"/>
<line x1="3.5" y1="10.8" x2="16.5" y2="10.8" stroke="#d9433a" stroke-width="0.7"/>
<line x1="12.5" y1="5.5" x2="12.5" y2="13.5" stroke="#d9433a" stroke-width="0.8"/>
<line x1="3.5" y1="16.5" x2="12" y2="16.5" stroke="#d9433a" stroke-width="0.9"/>
<line x1="3.5" y1="19.5" x2="12" y2="19.5" stroke="#d9433a" stroke-width="0.9"/>
<path d="M14.5 16 L19.8 21.5 M19.8 16 L14.5 21.5" stroke="#d9433a" stroke-width="1"/>
</svg>
<div class="t" style="left:204px;top:153.52px;font-size:11.2px;color:#222;">Удалить акты за месяц (апрель 2025)</div>
<div class="t" style="left:204px;top:187.43px;font-size:11.3px;color:#222;">Удалить все акты</div>
</body></html>
